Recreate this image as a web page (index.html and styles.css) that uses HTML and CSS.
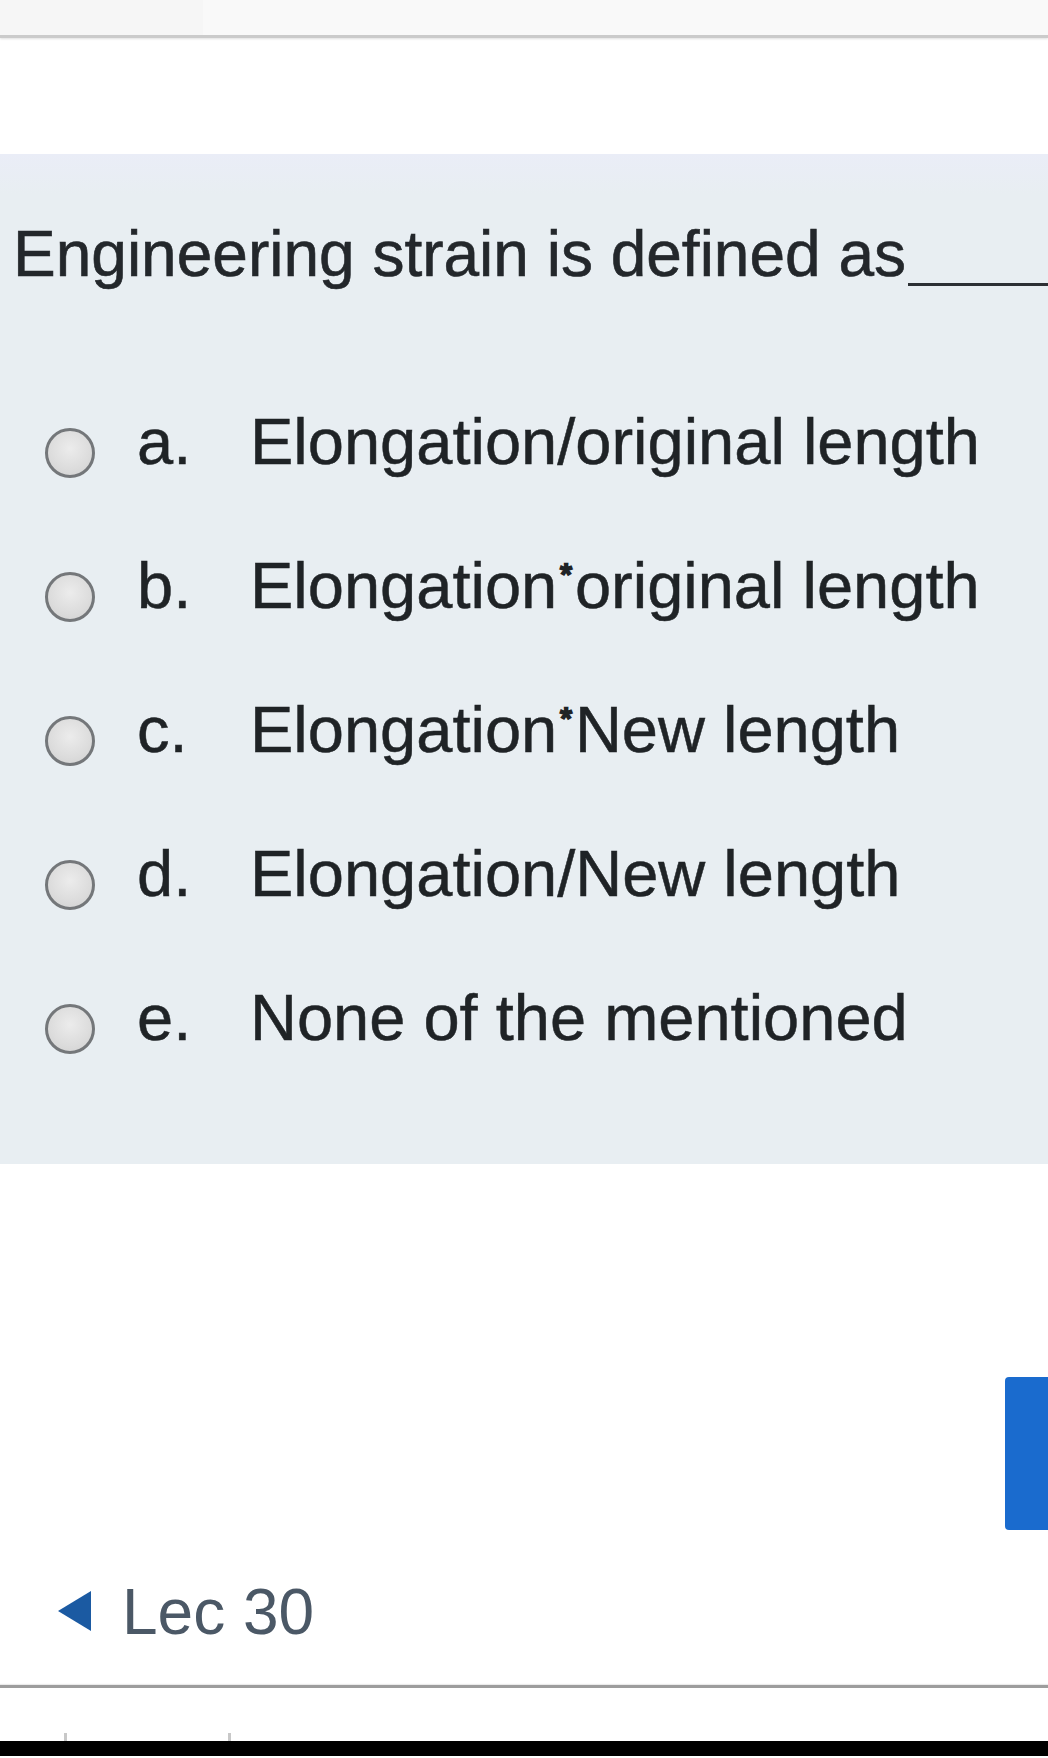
FILE: index.html
```html
<!DOCTYPE html>
<html lang="en">
<head>
<meta charset="utf-8">
<title>Quiz question</title>
<link rel="stylesheet" href="styles.css">
</head>
<body>
<header class="topbar">
  <div class="topbar-tab"></div>
  <div class="topbar-rest"></div>
</header>
<main class="page">
  <section class="question">
    <p class="qtext">Engineering strain is defined as<span class="blank"></span></p>
    <div class="answers">
      <label class="answer"><span class="radio"></span><span class="letter">a.</span><span class="atext">Elongation/original length</span></label>
      <label class="answer"><span class="radio"></span><span class="letter">b.</span><span class="atext">Elongation<span class="star">*</span>original length</span></label>
      <label class="answer"><span class="radio"></span><span class="letter">c.</span><span class="atext">Elongation<span class="star">*</span>New length</span></label>
      <label class="answer"><span class="radio"></span><span class="letter">d.</span><span class="atext">Elongation/New length</span></label>
      <label class="answer"><span class="radio"></span><span class="letter">e.</span><span class="atext">None of the mentioned</span></label>
    </div>
  </section>
  <div class="actions">
    <button class="next-btn" type="button" aria-label="Next page"></button>
  </div>
  <a class="prev-link" href="#"><span class="arrow"></span>Lec 30</a>
</main>
<footer class="footer">
  <div class="jump"><span class="mark mark-a"></span><span class="mark mark-b"></span></div>
  <div class="blackbar"></div>
</footer>
</body>
</html>
```

FILE: styles.css
```css
html, body {
  margin: 0;
  padding: 0;
}
body {
  width: 1048px;
  height: 1758px;
  overflow: hidden;
  background: #ffffff;
  font-family: "Liberation Sans", Arial, sans-serif;
  color: #1f2326;
}

.topbar {
  display: flex;
  height: 35px;
  border-bottom: 3px solid #cbcbcb;
  box-shadow: 0 1px 2px rgba(0, 0, 0, 0.12);
}
.topbar-tab {
  width: 203px;
  background: #f6f6f6;
}
.topbar-rest {
  flex: 1;
  background: #f9f9f9;
}

.page {
  display: flex;
  flex-direction: column;
}

.question {
  margin-top: 116px;
  background: linear-gradient(#eaedf7 0, #e8eef2 40px, #e8eef2 100%);
  padding: 60px 0 106px 13px;
  overflow: hidden;
}

.qtext {
  margin: 0;
  font-size: 64px;
  line-height: 80px;
  white-space: nowrap;
  color: #23272b;
  -webkit-text-stroke: 0.6px #23272b;
}
.blank {
  display: inline-block;
  width: 160px;
  height: 0;
  border-bottom: 3px solid #2c3034;
  margin-left: 2px;
  margin-bottom: -10px;
}

.answers {
  margin-top: 108px;
  padding-left: 32px;
  display: flex;
  flex-direction: column;
  gap: 64px;
}
.answer {
  display: flex;
  align-items: flex-start;
  height: 80px;
  font-size: 65px;
  line-height: 80px;
  white-space: nowrap;
  -webkit-text-stroke: 0.5px #1f2326;
}
.radio {
  flex: none;
  width: 44px;
  height: 44px;
  margin-top: 26px;
  border: 3px solid #74777a;
  border-radius: 50%;
  background: radial-gradient(circle at 50% 40%, #ececec 0, #dcdcdc 60%, #cfcfcf 100%);
}
.letter {
  width: 113px;
  margin-left: 42px;
  flex: none;
}
.atext {
  color: #1f2326;
}
.star {
  display: inline-block;
  margin: 0 3px;
  font-size: 30px;
  line-height: 30px;
  vertical-align: 24px;
  -webkit-text-stroke: 2.5px #1f2326;
}

.actions {
  display: flex;
  justify-content: flex-end;
  margin-top: 213px;
  height: 153px;
  overflow: hidden;
}
.next-btn {
  flex: none;
  width: 260px;
  height: 153px;
  margin-right: -217px;
  border: 0;
  border-radius: 4px;
  background: #1a6bce;
}

.prev-link {
  display: flex;
  align-items: center;
  margin-top: 42px;
  padding-left: 58px;
  height: 80px;
  font-size: 64px;
  line-height: 80px;
  color: #4b5866;
  text-decoration: none;
}
.arrow {
  width: 0;
  height: 0;
  border-top: 20px solid transparent;
  border-bottom: 20px solid transparent;
  border-right: 33px solid #1b5aa2;
  margin-right: 31px;
  margin-top: -2px;
}

.footer {
  margin-top: 33px;
  border-top: 3px solid #9d9d9d;
  box-shadow: 0 -1px 1px rgba(0, 0, 0, 0.08);
}
.jump {
  position: relative;
  height: 53px;
}
.mark {
  position: absolute;
  bottom: 0;
  width: 3px;
  height: 8px;
  background: #c8c8c8;
}
.mark-a {
  left: 64px;
}
.mark-b {
  left: 228px;
}
.blackbar {
  height: 15px;
  background: #000000;
}
```
